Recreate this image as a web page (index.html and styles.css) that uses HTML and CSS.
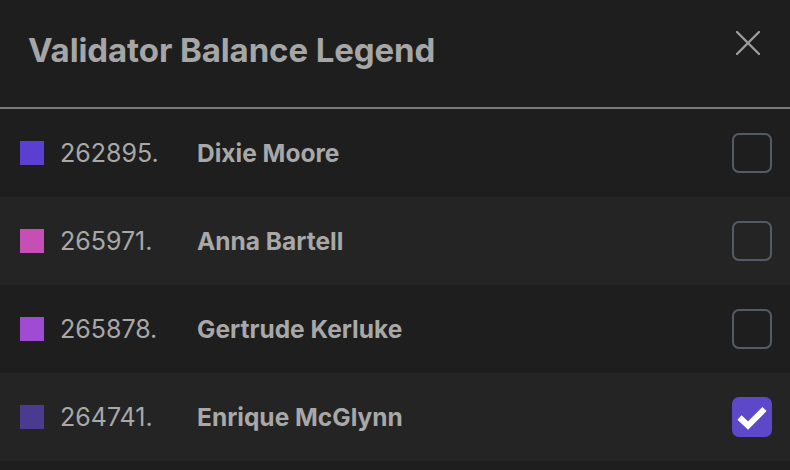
FILE: index.html
```html
<!DOCTYPE html>
<html>
<head>
<meta charset="utf-8">
<link rel="stylesheet" href="styles.css">
</head>
<body>
<div class="panel">
  <div class="header">
    <h1 class="title">Validator Balance Legend</h1>
    <button class="close" aria-label="Close">
      <svg width="24" height="24" viewBox="0 0 24 24"><path d="M1 1 L23 23 M23 1 L1 23" stroke="#9c9c9c" stroke-width="2.4" stroke-linecap="round"/></svg>
    </button>
  </div>
  <ul class="list">
    <li class="row">
      <span class="swatch c1"></span>
      <span class="num">262895.</span>
      <span class="name">Dixie Moore</span>
      <span class="check"></span>
    </li>
    <li class="row alt">
      <span class="swatch c2"></span>
      <span class="num">265971.</span>
      <span class="name">Anna Bartell</span>
      <span class="check"></span>
    </li>
    <li class="row">
      <span class="swatch c3"></span>
      <span class="num">265878.</span>
      <span class="name">Gertrude Kerluke</span>
      <span class="check"></span>
    </li>
    <li class="row alt">
      <span class="swatch c4"></span>
      <span class="num">264741.</span>
      <span class="name">Enrique McGlynn</span>
      <span class="check checked">
        <svg width="40" height="40" viewBox="0 0 40 40"><path d="M7.5 20.5 L16 28.5 L32.5 12" fill="none" stroke="#ffffff" stroke-width="6" stroke-linecap="butt" stroke-linejoin="miter"/></svg>
      </span>
    </li>
  </ul>
</div>
</body>
</html>
```

FILE: styles.css
```css
html, body {
  margin: 0;
  padding: 0;
  background: #1e1e1e;
}
body {
  font-family: Inter, "Noto Sans", sans-serif;
  width: 790px;
  height: 470px;
  overflow: hidden;
}
.panel {
  display: flex;
  flex-direction: column;
}
.header {
  height: 107px;
  display: flex;
  align-items: flex-start;
  justify-content: space-between;
  padding: 0 30px 0 28px;
  border-bottom: 2px solid #7a7a7a;
}
.title {
  margin: 29px 0 0 0;
  font-size: 33px;
  line-height: 42px;
  font-weight: 700;
  color: #a6a6a6;
  letter-spacing: -0.1px;
}
.close {
  margin-top: 31px;
  padding: 0;
  border: 0;
  background: none;
  width: 24px;
  height: 24px;
  display: block;
}
.close svg { display: block; }
.list {
  list-style: none;
  margin: 0;
  padding: 0;
}
.row {
  height: 88px;
  display: flex;
  align-items: center;
  padding: 0 18px 0 20px;
  background: #1e1e1e;
}
.row.alt { background: #242424; }
.swatch {
  width: 24px;
  height: 24px;
  flex: none;
}
.c1 { background: #5b3fd2; }
.c2 { background: #c64fb6; }
.c3 { background: #9f4bd3; }
.c4 { background: #4a3a90; }
.num {
  margin-left: 16px;
  width: 137px;
  flex: none;
  font-size: 25px;
  color: #a8a8a8;
  font-weight: 400;
}
.name {
  flex: 1;
  font-size: 24.5px;
  font-weight: 700;
  color: #a8a8a8;
}
.check {
  width: 40px;
  height: 40px;
  box-sizing: border-box;
  border: 2px solid #545b66;
  border-radius: 7px;
  flex: none;
  position: relative;
}
.check.checked {
  background: #5c48c9;
  border-color: #5c48c9;
}
.check svg {
  position: absolute;
  left: -2px;
  top: -2px;
}
```
